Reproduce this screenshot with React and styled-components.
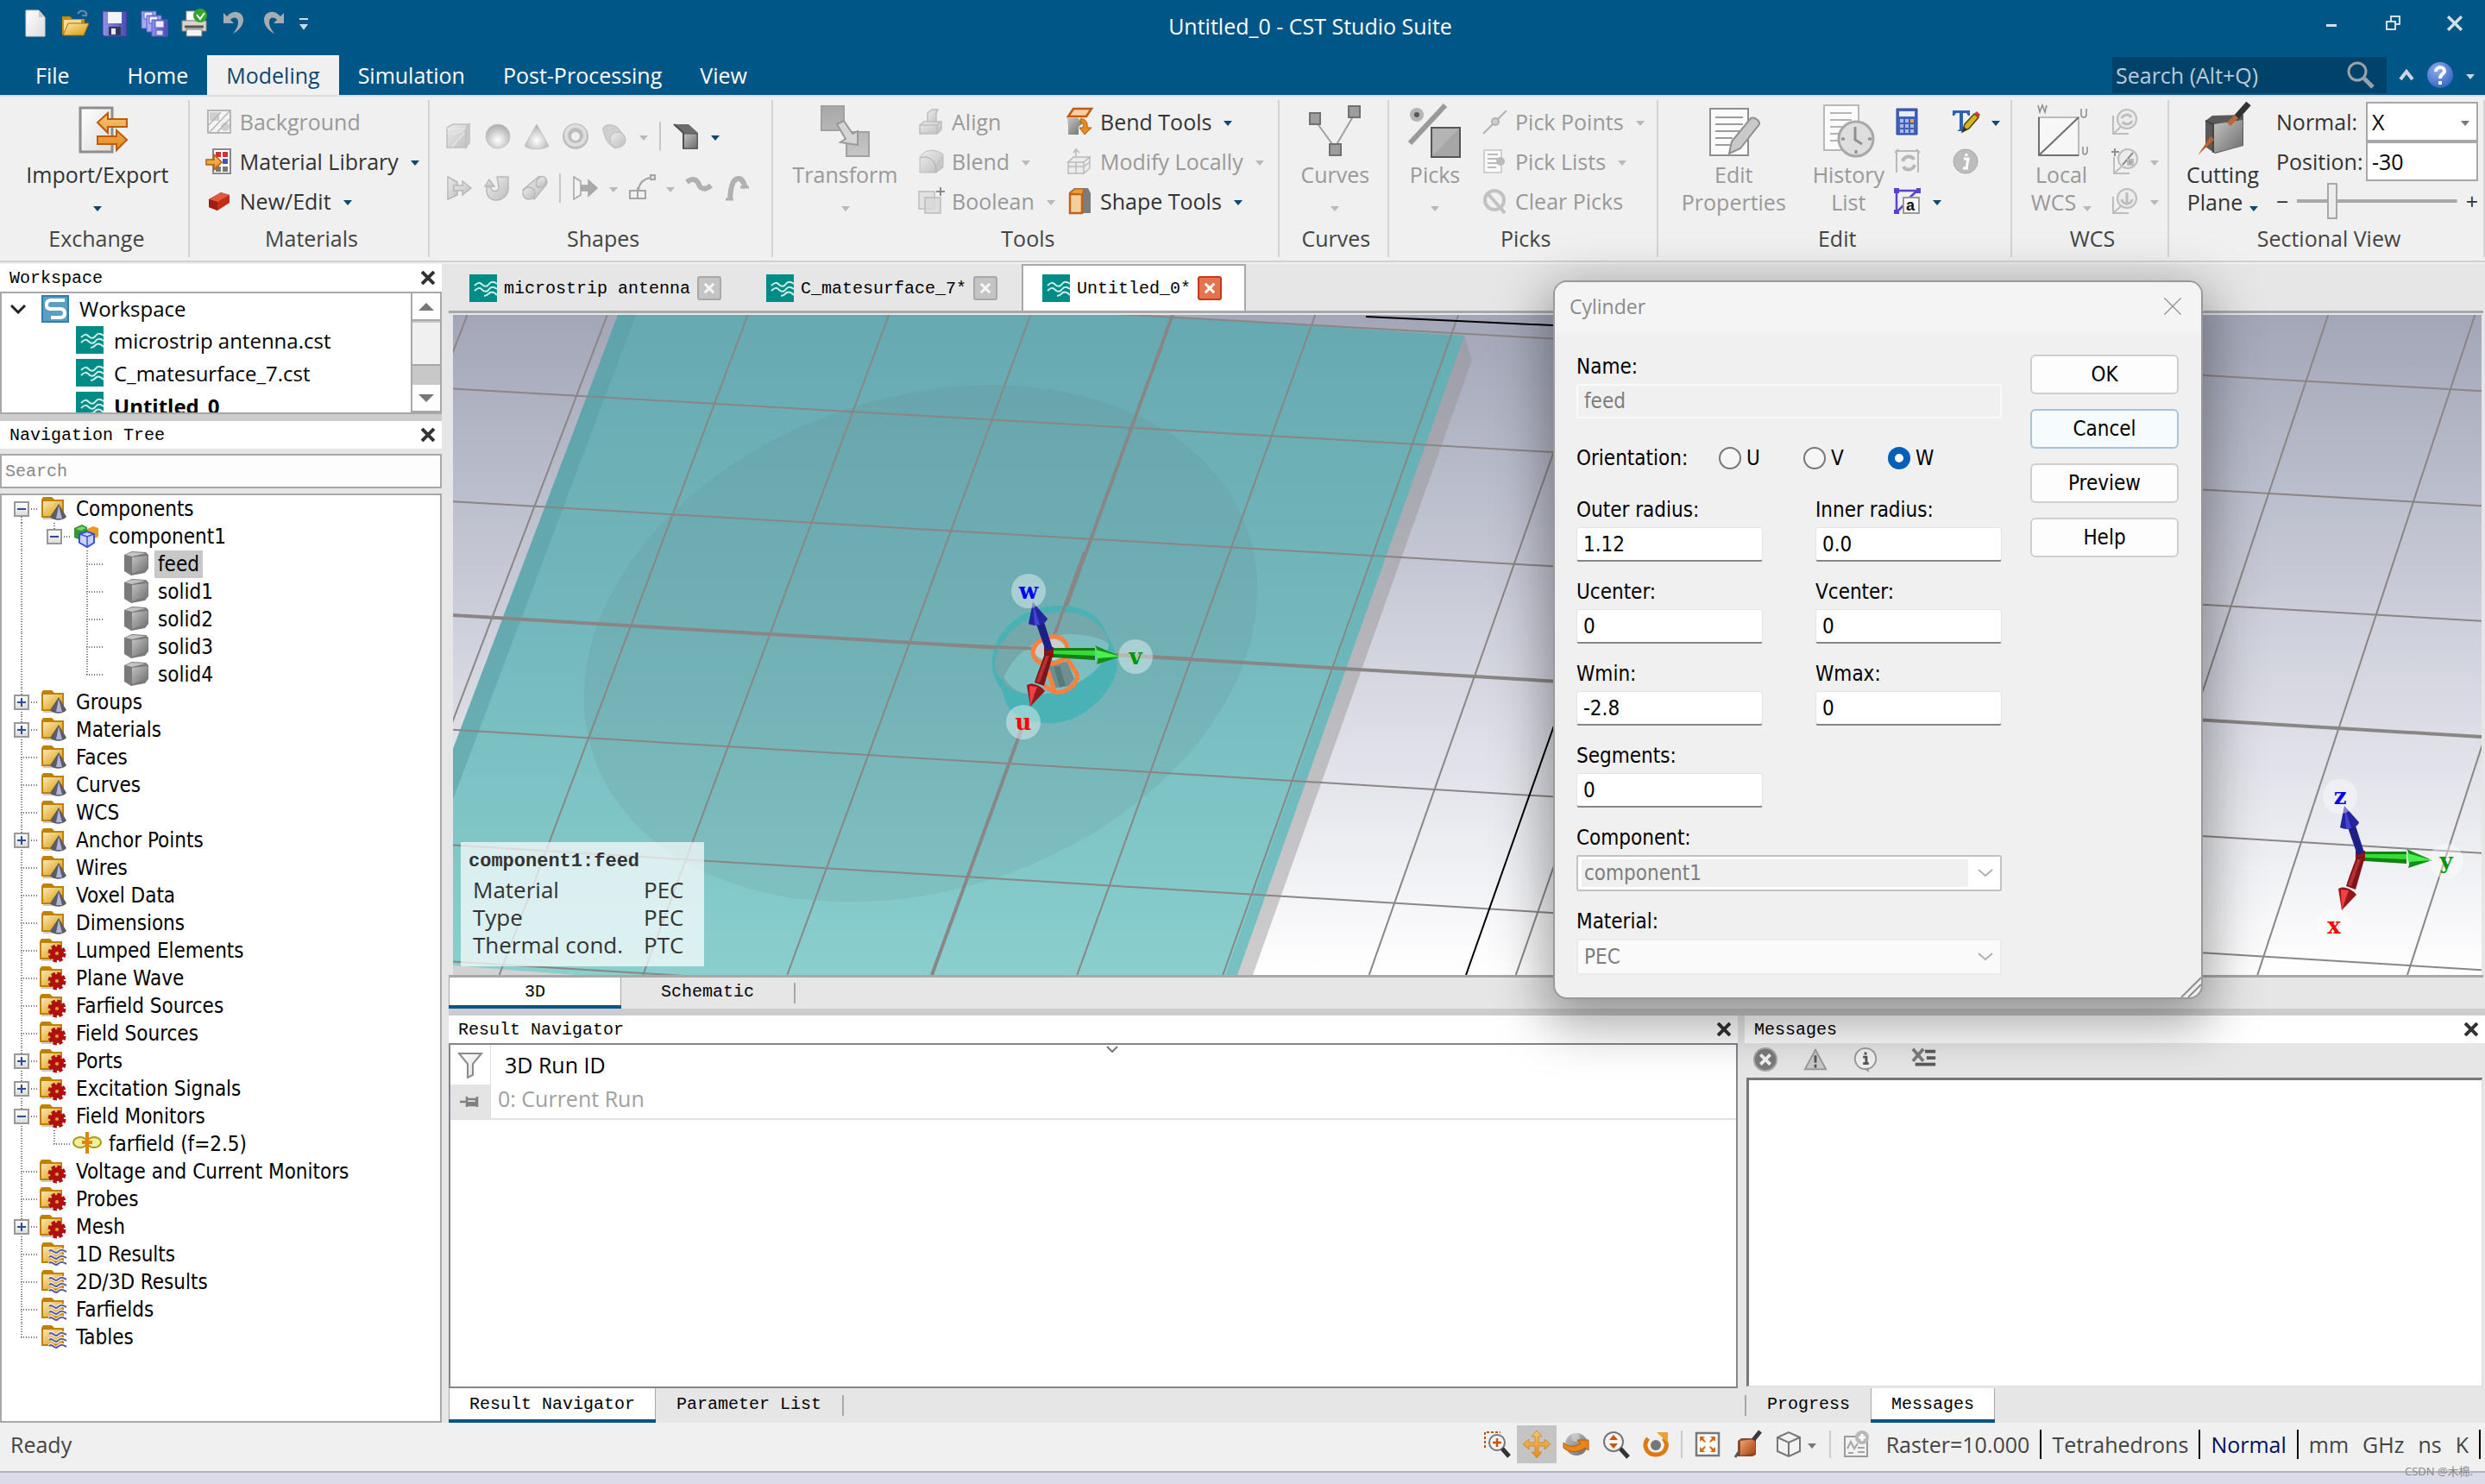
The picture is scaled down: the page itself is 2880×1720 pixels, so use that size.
import React, { useState } from 'react';
import styled, { createGlobalStyle } from 'styled-components';

const UI = '"Open Sans", "Noto Sans", "Noto Sans CJK SC", sans-serif';
const TAHOMA = '"DejaVu Sans Condensed", "Noto Sans", sans-serif';
const MONO = '"Liberation Mono", "Noto Sans CJK SC", monospace';

const GlobalStyle = createGlobalStyle`
  * {
    box-sizing: border-box;
  }
  body {
    margin: 0;
    background-color: #dadde9;
    font-family: ${UI};
    font-size: 25px;
    color: #333;
  }
  button, input, select {
    font: inherit;
    color: inherit;
    margin: 0;
  }
  button {
    padding: 0;
    border: none;
    background: none;
  }
  svg {
    display: block;
    flex: none;
  }
`;

/* ---------- icons ---------- */

const Defs = () => (
  <HiddenSvg width="0" height="0" aria-hidden="true">
    <defs>
      <linearGradient id="steel" x1="0" y1="0" x2="1" y2="1">
        <stop offset="0" stopColor="#ededed" />
        <stop offset="1" stopColor="#bdbdbd" />
      </linearGradient>
      <linearGradient id="dark" x1="0" y1="0" x2="1" y2="1">
        <stop offset="0" stopColor="#c4c4c4" />
        <stop offset="1" stopColor="#6c6c6c" />
      </linearGradient>
      <linearGradient id="mid" x1="0" y1="0" x2="0" y2="1">
        <stop offset="0" stopColor="#a8a8a8" />
        <stop offset="1" stopColor="#c6c6c6" />
      </linearGradient>
      <linearGradient id="paper" x1="0" y1="0" x2="1" y2="1">
        <stop offset="0" stopColor="#fff" />
        <stop offset="1" stopColor="#dcdcdc" />
      </linearGradient>
      <linearGradient id="gold" x1="0" y1="0" x2="1" y2="1">
        <stop offset="0" stopColor="#fae6b4" />
        <stop offset="1" stopColor="#d99a00" />
      </linearGradient>
      <linearGradient id="orange" x1="0" y1="0" x2="0" y2="1">
        <stop offset="0" stopColor="#f7c673" />
        <stop offset="1" stopColor="#e08a1e" />
      </linearGradient>
      <linearGradient id="rust" x1="0" y1="0" x2="1" y2="1">
        <stop offset="0" stopColor="#f0a878" />
        <stop offset="1" stopColor="#a83c08" />
      </linearGradient>
      <linearGradient id="violet" x1="0" y1="0" x2="1" y2="0">
        <stop offset="0" stopColor="#8d92e6" />
        <stop offset="1" stopColor="#4a4bb0" />
      </linearGradient>
      <radialGradient id="ball" cx=".5" cy=".65" r=".6">
        <stop offset="0" stopColor="#fff" />
        <stop offset="1" stopColor="#b0b0b0" />
      </radialGradient>
      <radialGradient id="help" cx=".4" cy=".3" r=".8">
        <stop offset="0" stopColor="#8fb0ee" />
        <stop offset="1" stopColor="#2d5cc0" />
      </radialGradient>
    </defs>
  </HiddenSvg>
);

const icons = {
  newFile: (
    <g>
      <path d="M5 1h15l7 8v22H5z" fill="url(#paper)" stroke="#d5d5d5" />
      <path d="M20 1v8h7z" fill="#c9c9c9" />
    </g>
  ),
  open: (
    <g>
      <path d="M1 8h9l3 3h14v18H1z" fill="#c98f08" />
      <path d="M3 28V12h20v5z" fill="#f4dc93" />
      <path d="M8 16h24l-6 14H2z" fill="url(#gold)" stroke="#a87000" />
      <path d="M19 5c3-5 9-4 10 0M29 8V3M29 7h-5" fill="none" stroke="#6c8ba0" strokeWidth="2" />
    </g>
  ),
  save: (
    <g>
      <path d="M2 2h28v29H4l-2-2z" fill="url(#violet)" stroke="#3b3c9c" />
      <path d="M8 3h16v13H8z" fill="#f2f3ff" />
      <path d="M9 20h14v10H9z" fill="#333a55" />
      <path d="M12 22h5v7h-5z" fill="#e8e8f0" />
    </g>
  ),
  saveAll: (
    <g stroke="#5b5fc4" strokeWidth="1">
      <path d="M1 2h17v20H1z" fill="#a5a9ee" />
      <path d="M4 3h10v8H4z" fill="#eef" />
      <path d="M7 7h17v19H7z" fill="#a5a9ee" />
      <path d="M10 8h10v8H10z" fill="#eef" />
      <path d="M13 12h18v19H13z" fill="url(#violet)" />
      <path d="M17 13h10v8H17z" fill="#eef" />
      <path d="M18 24h8v6h-8z" fill="#dde" />
    </g>
  ),
  print: (
    <g>
      <path d="M7 2h13v11H7z" fill="#fff" stroke="#aaa" />
      <path d="M2 13h28v12H2z" fill="#d8d4cc" stroke="#8b8b86" />
      <path d="M5 20h22" stroke="#555" strokeWidth="3" />
      <path d="M7 23h18v8H7z" fill="#f4f4f4" stroke="#777" />
      <circle cx="23" cy="7" r="8" fill="#35a52f" />
      <path d="M19 6l4 5 5-7" fill="none" stroke="#fff" strokeWidth="2" />
    </g>
  ),
  undo: (
    <path d="M4 4v12h12l-4-4c4-4 9-3 9 3 0 5-3 9-6 13 6-3 12-9 12-16C27 2 15-1 8 8z" fill="#a5adb3" />
  ),
  redo: (
    <path d="M28 4v12H16l4-4c-4-4-9-3-9 3 0 5 3 9 6 13-6-3-12-9-12-16C5 2 17-1 24 8z" fill="#a5adb3" />
  ),
  background: (
    <g>
      <path d="M3 3h26v26H3z" fill="#f4f4f4" stroke="#b5b5b5" strokeWidth="2" />
      <path d="M5 5h11v10H5z" fill="#cfcfcf" />
      <circle cx="23" cy="22" r="5" fill="#cfcfcf" />
      <path d="M5 28L28 4M4 20L18 5M14 28l14-15" stroke="#b5b5b5" strokeWidth="1.5" />
    </g>
  ),
  library: (
    <g>
      <path d="M9 2h20v28H9z" fill="#fff" stroke="#888" strokeWidth="2" />
      <path d="M12 5h6v6h-6zM20 5h6v6h-6z" fill="#c33" />
      <path d="M20 13h6v6h-6z" fill="#4a4fc4" />
      <path d="M12 22h6v6h-6zM20 22h6v6h-6z" fill="#777" />
      <path d="M1 14h9V8l9 9-9 9v-6H1z" fill="url(#orange)" stroke="#b85c00" strokeWidth="1.5" />
    </g>
  ),
  brick: (
    <g>
      <path d="M4 14l14-8 10 3v9l-14 9-10-4z" fill="#c22d14" />
      <path d="M4 14l14-8 10 3-14 8z" fill="#dd5a40" />
      <path d="M14 17v10l-10-4v-9z" fill="#9c200c" />
    </g>
  ),
  box: (
    <g stroke="#c0c0c0" strokeWidth="1.5">
      <path d="M2 6l7-4h19l-4 5v22H2z" fill="url(#steel)" />
      <path d="M24 7l4-5v21l-4 6z" fill="#c9c9c9" />
      <path d="M2 7h22M9 14l12-5M8 28L22 12" fill="none" stroke="#e6e6e6" />
    </g>
  ),
  sphere: <circle cx="16" cy="16" r="14" fill="url(#ball)" stroke="#c4c4c4" />,
  cone: <path d="M16 2l14 25c-4 5-24 5-28 0z" fill="url(#ball)" stroke="#c4c4c4" />,
  torus: (
    <g>
      <circle cx="16" cy="16" r="10" fill="none" stroke="#bdbdbd" strokeWidth="10" />
      <circle cx="16" cy="15" r="11" fill="none" stroke="#dedede" strokeWidth="4" />
    </g>
  ),
  cylinder: (
    <g>
      <path d="M3 8C2 2 14 1 20 6l8 10-10 14C9 27 4 17 3 8z" fill="#cfcfcf" stroke="#bcbcbc" />
      <circle cx="20" cy="20" r="9" fill="url(#steel)" stroke="#bcbcbc" />
    </g>
  ),
  facet: (
    <g>
      <path d="M2 2h17l11 10v19H12V12z" fill="#6d6d6d" />
      <path d="M13 13h16v17H13z" fill="url(#dark)" stroke="#555" />
      <path d="M2 2l11 10v18" fill="none" stroke="#505050" strokeWidth="2" />
    </g>
  ),
  extrude: (
    <g fill="url(#steel)" stroke="#b8b8b8" strokeWidth="1.5">
      <path d="M3 3l11 6v15L3 29z" />
      <path d="M10 13h10V8l10 8-10 8v-5H10z" />
    </g>
  ),
  rotate: (
    <g fill="url(#steel)" stroke="#b8b8b8" strokeWidth="1.5">
      <path d="M16 3h13v13c0 8-6 14-14 14S3 24 4 15h5c0 6 9 6 9 0z" />
      <path d="M2 14h11L7 6z" />
    </g>
  ),
  loft: (
    <g fill="url(#steel)" stroke="#b8b8b8" strokeWidth="1.5">
      <path d="M2 18L20 3c6-2 12 4 9 9L15 29z" />
      <circle cx="9" cy="22" r="7" />
      <ellipse cx="23" cy="9" rx="5" ry="7" transform="rotate(35 23 9)" />
    </g>
  ),
  profile: (
    <g stroke="#a5a5a5" strokeWidth="1.5">
      <path d="M3 3l8 5v16l-8 5z" fill="#f2f2f2" />
      <path d="M12 13h8V7l10 9-10 9v-6h-8z" fill="#a9a9a9" />
    </g>
  ),
  wire: (
    <g fill="none" stroke="#a5a5a5" strokeWidth="2">
      <path d="M2 19h18v9H2zM11 15v14M12 18C13 8 20 5 26 4" />
      <path d="M26 1h5v5h-5z" fill="#e5e5e5" />
    </g>
  ),
  wave: (
    <path d="M2 9c8-6 12-2 14 3s7 7 14 1" fill="none" stroke="#b0b0b0" strokeWidth="6" />
  ),
  hook: (
    <g fill="none" stroke="#b0b0b0">
      <path d="M8 29C9 10 13 4 19 5c4 1 5 5 7 11" strokeWidth="6" />
      <path d="M3 29h9M20 15h10" strokeWidth="3" />
    </g>
  ),
  align: (
    <g fill="url(#steel)" stroke="#bdbdbd" strokeWidth="1.5">
      <path d="M12 6l5-4h7l-2 4v14H12z" />
      <path d="M3 20l5-4h20v9l-5 5H3z" />
      <path d="M3 20h20v10M23 20l5-4" fill="none" />
    </g>
  ),
  blend: (
    <g stroke="#bdbdbd">
      <path d="M3 12C6 3 20 0 30 8v15l-8 6H3z" fill="url(#steel)" />
      <path d="M3 12c8-3 19 0 19 17" fill="none" stroke="#aaa" />
      <path d="M22 22l8-12" />
    </g>
  ),
  boolean: (
    <g fill="#e2e2e2" stroke="#bcbcbc" strokeWidth="1.5">
      <path d="M2 5h18v20H2z" />
      <path d="M9 12h18v18H9z" fill="#d8d8d8" fillOpacity=".8" />
      <path d="M27 0v10M22 5h10" stroke="#8a8a8a" strokeWidth="2" />
    </g>
  ),
  bend: (
    <g>
      <path d="M3 10l6-9h21l-6 9z" fill="#f6cfa2" stroke="#c55a0c" strokeWidth="2.5" />
      <path d="M2 12h12l6 6-5 4v9H3V20z" fill="url(#dark)" />
      <path d="M17 13c6-1 9 4 8 10h5l-8 8-6-8h4c1-4 0-6-3-6z" fill="#e88a24" stroke="#b85c00" />
    </g>
  ),
  modify: (
    <g fill="#ececec" stroke="#bababa" strokeWidth="1.5">
      <path d="M3 17h18v13H3zM3 17l6-6h19l-7 6zM21 30l7-6V11l-7 6z" />
      <path d="M3 22h18l7-5M12 12v-9M9 6l3-4 4 4M12 17v13" fill="none" />
    </g>
  ),
  shape: (
    <g>
      <path d="M4 6l6-5h16l3 6v23H4z" fill="#7c7c7c" />
      <path d="M5 8h14v22H5z" fill="#f3cf9e" stroke="#c8600e" strokeWidth="2.5" />
      <path d="M5 7l6-5h10l-2 6z" fill="#f09a32" stroke="#c8600e" />
    </g>
  ),
  pickPoint: (
    <g stroke="#b0b0b0" strokeWidth="2" fill="#cfcfcf">
      <path d="M3 30L30 3" />
      <circle cx="17" cy="16" r="4" />
    </g>
  ),
  pickList: (
    <g>
      <path d="M4 3h20v26H4z" fill="#fafafa" stroke="#c4c4c4" strokeWidth="1.5" />
      <path d="M8 8h12M8 13h12M8 18h12M8 23h10" stroke="#bbb" strokeWidth="2" />
      <circle cx="23" cy="16" r="5" fill="#bbb" />
    </g>
  ),
  clear: (
    <g fill="none" stroke="#c2c2c2">
      <circle cx="16" cy="15" r="11" strokeWidth="4" />
      <path d="M8 7l20 23" strokeWidth="4" />
    </g>
  ),
  calculator: (
    <g>
      <path d="M4 1h24v30H4z" fill="#4461b8" stroke="#2d479c" />
      <path d="M7 4h18v6H7z" fill="#e4ebfa" />
      <path d="M8 13h4v4H8zM14 13h4v4h-4zM8 19h4v4H8zM14 19h4v4h-4zM20 19h4v4h-4zM8 25h4v4H8zM14 25h4v4h-4zM20 25h4v4h-4z" fill="#a9b9ea" />
      <path d="M20 13h4v4h-4z" fill="#e9a73b" />
    </g>
  ),
  textEdit: (
    <g>
      <path d="M1 3h20v6h-2l-2-3h-4v19l3 2H6l3-2V6H5L3 9H1z" fill="#2a62b8" />
      <path d="M12 28l3-9L26 7l5 4-11 13z" fill="#d8b31d" stroke="#4e4410" strokeWidth="1.5" />
      <path d="M26 7l3-3 4 4-2 3z" fill="#cf3b3b" />
      <path d="M12 28l2-6 4 3z" fill="#333" />
    </g>
  ),
  refreshFrame: (
    <g fill="none" stroke="#b9b9b9" strokeWidth="2">
      <path d="M4 29V4h25v25M2 6l4-4M27 2l4 4" />
      <path d="M11 16c2-7 11-7 13-2M25 20c-2 7-11 7-13 2" strokeWidth="4" />
    </g>
  ),
  info: (
    <g>
      <circle cx="16" cy="16" r="14" fill="#bdbdbd" stroke="#a8a8a8" />
      <path d="M14 13h5l-2 11h2M13 24h5M17 7v3" stroke="#fff" strokeWidth="3" fill="none" />
    </g>
  ),
  paramA: (
    <g>
      <path d="M4 29V4h26M18 13l10-9M4 29l9-9" fill="none" stroke="#5a42cf" strokeWidth="2.5" />
      <path d="M1 1h6v6H1zM27 1h5v6h-5zM1 26h6v5H1z" fill="#5a42cf" />
      <path d="M12 12h18v18H12z" fill="#fff" stroke="#999" strokeWidth="2" />
      <text x="15" y="27" fontSize="18" fontWeight="700" fontFamily="Liberation Sans" fill="#111">a</text>
    </g>
  ),
  wcsTurn: (
    <g fill="none" stroke="#bdbdbd" strokeWidth="2">
      <path d="M3 9v21h18M3 30l9-8" />
      <circle cx="19" cy="13" r="11" fill="#ececec" />
      <path d="M13 12c2-5 9-5 11-1M25 15c-2 5-9 5-11 1" strokeWidth="3" />
    </g>
  ),
  wcsPick: (
    <g fill="none" stroke="#bdbdbd" strokeWidth="2">
      <path d="M4 11v19h18M4 30l9-8" />
      <circle cx="20" cy="13" r="11" fill="#ececec" />
      <path d="M14 20L26 6M5 1v9M1 5h9" stroke="#8f8f8f" />
      <path d="M20 14h6v6h-6z" fill="#aaa" />
    </g>
  ),
  wcsAnchor: (
    <g fill="none" stroke="#bdbdbd" strokeWidth="2">
      <path d="M3 11v19h18M3 30l9-8" />
      <circle cx="19" cy="13" r="11" fill="#ececec" />
      <path d="M19 6v13M13 14c1 7 11 7 12 0" strokeWidth="3" />
    </g>
  ),
  folderCone: (
    <g>
      <path d="M0 3l2-3h10l3 3h11v21H0z" fill="#c08000" />
      <path d="M2 5h22v17H2z" fill="url(#gold)" />
      <path d="M2 25h17" stroke="#ccc" strokeWidth="2" />
      <path d="M20 8l9 15c-4 5-15 5-19 0z" fill="#5c5c66" />
      <path d="M20 10l4 15h-7z" fill="#b3b6dc" />
    </g>
  ),
  folderGear: (
    <g>
      <path d="M-2 3l2-3h10l3 3h11v21H-2z" fill="#c08000" />
      <path d="M0 5h22v17H0z" fill="url(#gold)" />
      <path d="M0 25h14" stroke="#ccc" strokeWidth="2" />
      <circle cx="18" cy="17" r="8" fill="none" stroke="#b01010" strokeWidth="5" strokeDasharray="4 2.3" />
      <circle cx="18" cy="17" r="5" fill="none" stroke="#b01010" strokeWidth="6" />
    </g>
  ),
  folderWave: (
    <g>
      <path d="M0 3l2-3h10l3 3h11v21H0z" fill="#c08000" />
      <path d="M2 5h22v17H2z" fill="url(#gold)" />
      <path d="M9 10c4-4 6 5 10 1s6-2 10 0M9 17c4-4 6 5 10 1s6-2 10 0M9 24c4-4 6 5 10 1s6-2 10 0" fill="none" stroke="#fff" strokeWidth="4" />
      <path d="M9 10c4-4 6 5 10 1s6-2 10 0M9 17c4-4 6 5 10 1s6-2 10 0M9 24c4-4 6 5 10 1s6-2 10 0" fill="none" stroke="#5a55a8" strokeWidth="2" />
    </g>
  ),
  cubes: (
    <g>
      <path d="M0 4l9-4 6 3v10l-8 5-7-3z" fill="#2f9a2f" />
      <path d="M2 5l7-3 5 2-6 3z" fill="#7ad46f" />
      <path d="M15 5l7-3 6 2v10l-7 3-6-3z" fill="#ea9a1c" />
      <path d="M6 11l9-3 8 3v10l-8 5-9-5z" fill="#c8d2fb" stroke="#3c50d0" strokeWidth="2" />
      <path d="M6 11l9 3 8-3M15 14v11" fill="none" stroke="#3c50d0" strokeWidth="1.5" />
    </g>
  ),
  solid: (
    <g>
      <path d="M1 3l9-4 16 1 3 3v16l-4 5-16 3-8-5z" fill="#7a7a7a" />
      <path d="M2 3l8-3 16 1-16 4z" fill="#c4c4c4" />
      <path d="M10 6l18-2v15l-18 6z" fill="url(#dark)" />
    </g>
  ),
  farfield: (
    <g>
      <ellipse cx="7" cy="12" rx="8" ry="6" fill="#eef09c" stroke="#a89a10" strokeWidth="2" />
      <ellipse cx="23" cy="12" rx="8" ry="6" fill="#eef09c" stroke="#a89a10" strokeWidth="2" />
      <path d="M15 0v25M9 12h12" stroke="#e0850c" strokeWidth="4" />
    </g>
  ),
  project: (
    <g>
      <path d="M0 0h32v32H0z" fill="#008c86" />
      <path d="M6 13c4-4 6-4 9-1s6 2 8-1 5-3 9 0M6 19c4-4 6-4 9-1s6 2 8-1 5-3 9 0M17 25c4 0 5-3 7-4s4-1 8 3" fill="none" stroke="#cdeeea" strokeWidth="2" />
    </g>
  ),
  workspace: (
    <g>
      <path d="M0 0h32v32H0z" fill="#2f7fad" />
      <path d="M2 2h28v28H2z" fill="#5b9fc4" />
      <path d="M27 6H11q-5 0-5 5v1q0 4 5 4h11q5 0 5 5v0q0 5-5 5H11" fill="none" stroke="#fff" strokeWidth="4" />
    </g>
  ),
  funnel: (
    <path d="M3 3h26L19 15v13l-6 3V15z" fill="url(#paper)" stroke="#8a8a8a" strokeWidth="2" />
  ),
  pin: (
    <g stroke="#808080" strokeWidth="2.5" fill="none">
      <path d="M4 16h8M12 10v12M12 13h11v7H12M24 10v12" />
      <path d="M13 18h10" strokeWidth="4" />
    </g>
  ),
  errorBall: (
    <g>
      <circle cx="16" cy="16" r="14" fill="#7b7b7b" stroke="#a9a9a9" strokeWidth="2" />
      <path d="M10 10l12 12M22 10L10 22" stroke="#f2f2f2" strokeWidth="4" />
    </g>
  ),
  warning: (
    <g>
      <path d="M16 4l13 24H3z" fill="#c9c9c9" stroke="#9a9a9a" strokeWidth="2" />
      <path d="M16 11v9M16 22v4" stroke="#555" strokeWidth="3" />
    </g>
  ),
  infoBubble: (
    <g>
      <circle cx="16" cy="15" r="13" fill="#f1f1f1" stroke="#999" strokeWidth="2" />
      <path d="M14 27l6 5v-6z" fill="#999" />
      <path d="M16 7v3M13 13h4v8M13 21h7" stroke="#555" strokeWidth="3" fill="none" />
    </g>
  ),
  clearList: (
    <g>
      <path d="M2 3l13 15M15 3L2 18" stroke="#7b7b7b" strokeWidth="4" />
      <path d="M17 6h13M19 14h11M5 22h25" stroke="#5b5b5b" strokeWidth="4" />
    </g>
  ),
  zoomFrame: (
    <g>
      <path d="M2 20V2h18" fill="none" stroke="#b8560f" strokeWidth="2" strokeDasharray="3 2" />
      <circle cx="16" cy="14" r="9" fill="#f5f5f5" stroke="#777" strokeWidth="2" />
      <path d="M16 9v10M11 14h10" stroke="#c8560c" strokeWidth="2.5" />
      <path d="M22 21l8 9" stroke="#333" strokeWidth="5" />
    </g>
  ),
  pan: (
    <path d="M16 0l6 7h-4v7h7v-4l7 6-7 6v-4h-7v7h4l-6 7-6-7h4v-7H7v4l-7-6 7-6v4h7V7h-4z" fill="url(#orange)" stroke="#d48b2b" />
  ),
  orbit: (
    <g>
      <circle cx="16" cy="16" r="13" fill="url(#dark)" />
      <circle cx="15" cy="8" r="5" fill="#d8d8d8" fillOpacity=".6" />
      <path d="M1 14c6 6 14 5 20 1l-4-4h13v12l-4-3c-7 6-19 6-25 0z" fill="#e8861c" stroke="#b85c00" />
    </g>
  ),
  zoom: (
    <g>
      <circle cx="13" cy="13" r="11" fill="#f5f5f5" stroke="#777" strokeWidth="2" />
      <path d="M13 5l5 6H8zM13 21l5-6H8z" fill="#c8560c" />
      <path d="M21 21l9 10" stroke="#333" strokeWidth="5" />
    </g>
  ),
  spin: (
    <g>
      <path d="M7 9c-7 9-1 19 9 19 11 0 16-11 9-19" fill="none" stroke="#e0790f" strokeWidth="5" />
      <path d="M17 2h13v12z" fill="#f0a132" />
      <circle cx="16" cy="17" r="6" fill="#777" />
    </g>
  ),
  fit: (
    <g>
      <path d="M3 3h26v26H3z" fill="#fff" stroke="#777" strokeWidth="2.5" />
      <path d="M7 7h6l-2 2 3 4-1 1-4-3-2 2zM25 7h-6l2 2-3 4 1 1 4-3 2 2zM7 25h6l-2-2 3-4-1-1-4 3-2-2zM25 25h-6l2-2-3-4 1-1 4 3 2-2z" fill="#d96a14" />
    </g>
  ),
  cutSmall: (
    <g>
      <path d="M5 12l4-3h17v19l-4 2H5z" fill="#8a4a28" />
      <path d="M8 12l17-2v16L8 29z" fill="url(#rust)" />
      <path d="M31 1l-8 10" stroke="#3a3a3a" strokeWidth="5" />
      <path d="M6 25l-4 6" stroke="#555" strokeWidth="3" />
    </g>
  ),
  cube: (
    <path d="M3 8l13-6 13 6v16l-13 6-13-6zM3 8l13 6 13-6M16 14v16" fill="#f2f2f2" stroke="#777" strokeWidth="2" />
  ),
  report: (
    <g>
      <path d="M3 7h26v23H3z" fill="#f2f2f2" stroke="#9a9a9a" strokeWidth="2" />
      <path d="M6 21l4-8 4 8 4-6M7 26h6M18 20h8M18 25h8" fill="none" stroke="#a5a5a5" strokeWidth="2" />
      <circle cx="23" cy="8" r="8" fill="#b8b8b8" />
      <path d="M23 4v8M19 8h8" stroke="#fff" strokeWidth="3" />
    </g>
  ),
};

const bigIcons = {
  importExport: (
    <g>
      <path d="M10 3h37v51H10z" fill="url(#paper)" stroke="#8e8e8e" strokeWidth="3" />
      <path d="M30 20L42 9v7h22v9H42v7zM64 40L52 29v7H30v9h22v7z" fill="url(#orange)" stroke="#bf5a08" strokeWidth="2" />
    </g>
  ),
  transform: (
    <g>
      <path d="M2 1h26v28H2zM31 31h26v28H31z" fill="url(#mid)" stroke="#a0a0a0" strokeWidth="2" />
      <path d="M20 22l8-4 10 15 6-3v16l-20-3 6-4z" fill="#d5d5d5" stroke="#9a9a9a" strokeWidth="2" />
    </g>
  ),
  curves: (
    <g>
      <path d="M6 16l24 33L54 8" fill="none" stroke="#9f9f9f" strokeWidth="2" />
      <path d="M1 9h12v13H1zM46 1h13v13H46zM24 45h13v13H24z" fill="#9d9d9d" stroke="#717171" strokeWidth="2" />
    </g>
  ),
  picks: (
    <g>
      <path d="M1 44L42 0" stroke="#9a9a9a" strokeWidth="6" />
      <circle cx="9" cy="11" r="8" fill="#b4b4b4" />
      <circle cx="9" cy="11" r="3" fill="#555" />
      <path d="M26 26h33v34H26z" fill="#a6a6a6" stroke="#555" strokeWidth="2" />
      <path d="M27 59V27h31z" fill="#b4b4b4" />
    </g>
  ),
  editDoc: (
    <g>
      <path d="M3 4h44v54H3z" fill="#fbfbfb" stroke="#8e8e8e" strokeWidth="2" />
      <path d="M9 14h32M9 22h32M9 30h28M9 38h20M9 46h17" stroke="#9c9c9c" strokeWidth="2" />
      <path d="M25 56l3-14 22-27c4-2 11 3 10 7L38 50z" fill="#c9c9c9" stroke="#909090" strokeWidth="2" />
    </g>
  ),
  history: (
    <g>
      <path d="M2 0h40v52H2z" fill="#fbfbfb" stroke="#b8b8b8" strokeWidth="2" />
      <path d="M9 9h25M9 17h25M9 25h14M9 33h10M9 41h10" stroke="#b5b5b5" strokeWidth="2" />
      <circle cx="39" cy="39" r="20" fill="#dedede" stroke="#a8a8a8" strokeWidth="3" />
      <path d="M38 25v15l8 5M39 52v4M22 39h4M53 39h4" fill="none" stroke="#8f8f8f" strokeWidth="3" />
    </g>
  ),
  localWcs: (
    <g>
      <path d="M4 14v44h46V14z" fill="#f7f7f7" stroke="#bbb" strokeWidth="2" />
      <path d="M4 14v44h46M4 58l46-44" fill="none" stroke="#6f6f6f" strokeWidth="2" />
      <path d="M3 0l2 8 3-8 3 8 2-8M53 4v7q0 3 3 3t3-3V4M55 48v6q0 3 2 3t3-3v-6" fill="none" stroke="#8b8b8b" strokeWidth="1.5" />
    </g>
  ),
  cutting: (
    <g>
      <path d="M10 18l8-6 36-1v36l-33 9-11-8z" fill="#5a5a5a" />
      <path d="M20 22l33-5v30l-33 8z" fill="url(#dark)" />
      <path d="M10 18l9 4v33" fill="none" stroke="#444" strokeWidth="2" />
      <path d="M60 -2L44 16" stroke="#333" strokeWidth="7" />
      <path d="M46 13l-9 9" stroke="#b8683c" strokeWidth="6" />
      <path d="M1 58l15-22 4 4z" fill="#c0602c" />
    </g>
  ),
};

const Icon = ({ name, size = 32 }) => (
  <svg width={size} height={size} viewBox="0 0 32 32" overflow="visible" aria-hidden="true">
    {icons[name]}
  </svg>
);

const BigIcon = ({ name }) => (
  <svg width="60" height="60" viewBox="0 0 60 60" overflow="visible" aria-hidden="true">
    {bigIcons[name]}
  </svg>
);

const CloseMark = ({ size = 16, color = '#333', width = 4 }) => (
  <svg width={size} height={size} viewBox="0 0 16 16" aria-hidden="true">
    <path d="M1 1l14 14M15 1L1 15" stroke={color} strokeWidth={width} />
  </svg>
);

/* ---------- title bar and ribbon ---------- */

const TitleBar = () => (
  <Title>
    <QuickBar>
      {['newFile', 'open', 'save', 'saveAll', 'print', 'undo', 'redo'].map((name) => (
        <IconButton key={name} aria-label={name}>
          <Icon name={name} />
        </IconButton>
      ))}
      <IconButton aria-label="Customize">
        <svg width="10" height="16" viewBox="0 0 10 16">
          <path d="M0 3h10M2 10h6l-3 4z" stroke="#cfdbe4" strokeWidth="2" fill="#cfdbe4" />
        </svg>
      </IconButton>
    </QuickBar>
    <WindowTitle>Untitled_0 - CST Studio Suite</WindowTitle>
    <WindowButtons>
      <IconButton aria-label="Minimize">
        <svg width="20" height="20" viewBox="0 0 20 20">
          <path d="M4 11h12v3H4z" fill="#d4dfe7" />
        </svg>
      </IconButton>
      <IconButton aria-label="Restore">
        <svg width="20" height="20" viewBox="0 0 20 20">
          <path d="M7 7V2h10v9h-4M2 8h10v9H2z" fill="none" stroke="#d4dfe7" strokeWidth="2" />
        </svg>
      </IconButton>
      <IconButton aria-label="Close">
        <CloseMark size={18} color="#d4dfe7" width={3} />
      </IconButton>
    </WindowButtons>
  </Title>
);

const menu = ['File', 'Home', 'Modeling', 'Simulation', 'Post-Processing', 'View'];

const MenuBar = () => (
  <Menu>
    {menu.map((item) => (
      <MenuTab key={item} $active={item === 'Modeling'} $wide={item === 'File'}>
        {item}
      </MenuTab>
    ))}
    <MenuSearch>
      <input type="text" placeholder="Search (Alt+Q)" aria-label="Search (Alt+Q)" />
      <svg width="32" height="32" viewBox="0 0 32 32">
        <circle cx="12" cy="12" r="10" fill="none" stroke="#9aa3aa" strokeWidth="3" />
        <path d="M20 20l10 10" stroke="#9aa3aa" strokeWidth="5" />
      </svg>
    </MenuSearch>
    <IconButton aria-label="Collapse ribbon">
      <svg width="18" height="14" viewBox="0 0 18 14">
        <path d="M2 12l7-9 7 9" fill="none" stroke="#c9d7e0" strokeWidth="4" />
      </svg>
    </IconButton>
    <IconButton aria-label="Help">
      <svg width="32" height="32" viewBox="0 0 32 32">
        <circle cx="16" cy="16" r="15" fill="url(#help)" />
        <path d="M11 12c0-7 11-6 10 0-1 3-5 3-5 8M16 23v4" fill="none" stroke="#fff" strokeWidth="4" />
      </svg>
    </IconButton>
    <Caret $color="#c9d7e0" />
  </Menu>
);

const Small = ({ icon, label, caret, on }) => (
  <SmallButton disabled={!on} aria-label={label || icon}>
    <Icon name={icon} />
    {label}
    {caret && <Caret $color={on ? '#0b4870' : '#b9b9b9'} />}
  </SmallButton>
);

const Big = ({ icon, lines, on, caret }) => (
  <BigButton disabled={!on}>
    <BigIcon name={icon} />
    <span>{lines[0]}</span>
    <BigSecond>
      {lines[1]}
      {caret && <Caret $color={on ? '#0b4870' : '#b9b9b9'} $low />}
    </BigSecond>
  </BigButton>
);

const Group = ({ title, grow, cols, pad, center, children }) => (
  <RibbonGroup $grow={grow}>
    <GroupBody $cols={cols} $pad={pad} $center={center}>
      {children}
    </GroupBody>
    <GroupTitle>{title}</GroupTitle>
  </RibbonGroup>
);

const Ribbon = () => {
  const [position, setPosition] = useState(-30);
  return (
    <RibbonBar>
      <Group title="Exchange" grow={219} pad={8} center>
        <Big icon="importExport" lines={['Import/Export']} on caret />
      </Group>
      <Group title="Materials" grow={278} pad={18}>
        <Rows>
          <Small icon="background" label="Background" />
          <Small icon="library" label="Material Library" on caret />
          <Small icon="brick" label="New/Edit" on caret />
        </Rows>
      </Group>
      <Group title="Shapes" grow={398} pad={18}>
        <ShapeRows>
          <ShapeRow $gap={13}>
            <Icon name="box" />
            <Icon name="sphere" />
            <Icon name="cone" />
            <Icon name="torus" />
            <Icon name="cylinder" />
            <Caret $color="#b9b9b9" />
            <Divider />
            <Icon name="facet" />
            <Caret $color="#0b4870" />
          </ShapeRow>
          <ShapeRow $gap={12}>
            <Icon name="extrude" />
            <Icon name="rotate" />
            <Icon name="loft" />
            <Divider />
            <Icon name="profile" />
            <Caret $color="#b9b9b9" />
            <Icon name="wire" />
            <Caret $color="#b9b9b9" />
            <Icon name="wave" />
            <Icon name="hook" />
          </ShapeRow>
        </ShapeRows>
      </Group>
      <Group title="Tools" grow={588} cols="167px 172px 1fr">
        <Big icon="transform" lines={['Transform']} caret />
        <Rows>
          <Small icon="align" label="Align" />
          <Small icon="blend" label="Blend" caret />
          <Small icon="boolean" label="Boolean" caret />
        </Rows>
        <Rows>
          <Small icon="bend" label="Bend Tools" on caret />
          <Small icon="modify" label="Modify Locally" caret />
          <Small icon="shape" label="Shape Tools" on caret />
        </Rows>
      </Group>
      <Group title="Curves" grow={126} pad={4} center>
        <Big icon="curves" lines={['Curves']} caret />
      </Group>
      <Group title="Picks" grow={312} cols="106px 1fr">
        <Big icon="picks" lines={['Picks']} caret />
        <Rows>
          <Small icon="pickPoint" label="Pick Points" caret />
          <Small icon="pickList" label="Pick Lists" caret />
          <Small icon="clear" label="Clear Picks" />
        </Rows>
      </Group>
      <Group title="Edit" grow={410} cols="174px 92px 74px 1fr">
        <Big icon="editDoc" lines={['Edit', 'Properties']} />
        <Big icon="history" lines={['History', 'List']} />
        <Rows $inset>
          <Small icon="calculator" on />
          <Small icon="refreshFrame" />
          <Small icon="paramA" on caret />
        </Rows>
        <Rows>
          <Small icon="textEdit" on caret />
          <Small icon="info" />
        </Rows>
      </Group>
      <Group title="WCS" grow={181} cols="114px 1fr">
        <Big icon="localWcs" lines={['Local', 'WCS']} caret />
        <Rows>
          <Small icon="wcsTurn" />
          <Small icon="wcsPick" caret />
          <Small icon="wcsAnchor" caret />
        </Rows>
      </Group>
      <Group title="Sectional View" grow={366} cols="124px 1fr">
        <Big icon="cutting" lines={['Cutting', 'Plane']} on caret />
        <Rows>
          <RibbonField>
            <label htmlFor="normal">Normal:</label>
            <SelectWrap>
              <RibbonSelect id="normal" defaultValue="X">
                <option>X</option>
                <option>Y</option>
                <option>Z</option>
              </RibbonSelect>
              <CaretSlot>
                <Caret $color="#777" />
              </CaretSlot>
            </SelectWrap>
          </RibbonField>
          <RibbonField>
            <label htmlFor="position">Position:</label>
            <RibbonInput id="position" value={position} onChange={(e) => setPosition(e.target.value)} />
          </RibbonField>
          <SliderRow>
            <span>−</span>
            <Slider
              type="range"
              min="-50"
              max="50"
              aria-label="Plane position"
              value={position}
              onChange={(e) => setPosition(e.target.value)}
            />
            <span>+</span>
          </SliderRow>
        </Rows>
      </Group>
    </RibbonBar>
  );
};

/* ---------- left side ---------- */

const files = ['microstrip antenna.cst', 'C_matesurface_7.cst', 'Untitled_0'];

const WorkspacePanel = () => (
  <>
    <PanelTitle title="Workspace" />
    <WorkspaceBox>
      <FileList>
        <FileRow $root>
          <svg width="18" height="12" viewBox="0 0 18 12">
            <path d="M1 2l8 8 8-8" fill="none" stroke="#222" strokeWidth="3" />
          </svg>
          <Icon name="workspace" />
          Workspace
        </FileRow>
        {files.map((file, i) => (
          <FileRow key={file} $bold={i === 2}>
            <Icon name="project" />
            {file}
          </FileRow>
        ))}
      </FileList>
      <ScrollTrack>
        <ScrollArrow $up aria-label="Scroll up" />
        <ScrollThumb />
        <ScrollArrow aria-label="Scroll down" />
      </ScrollTrack>
    </WorkspaceBox>
  </>
);

const tree = [
  { text: 'Components', icon: 'folderCone', open: '-' },
  { text: 'component1', icon: 'cubes', level: 1, open: '-', last: true },
  { text: 'feed', icon: 'solid', level: 2, selected: true },
  { text: 'solid1', icon: 'solid', level: 2 },
  { text: 'solid2', icon: 'solid', level: 2 },
  { text: 'solid3', icon: 'solid', level: 2 },
  { text: 'solid4', icon: 'solid', level: 2, last: true },
  { text: 'Groups', icon: 'folderCone', open: '+' },
  { text: 'Materials', icon: 'folderCone', open: '+' },
  { text: 'Faces', icon: 'folderCone' },
  { text: 'Curves', icon: 'folderCone' },
  { text: 'WCS', icon: 'folderCone' },
  { text: 'Anchor Points', icon: 'folderCone', open: '+' },
  { text: 'Wires', icon: 'folderCone' },
  { text: 'Voxel Data', icon: 'folderCone' },
  { text: 'Dimensions', icon: 'folderCone' },
  { text: 'Lumped Elements', icon: 'folderGear' },
  { text: 'Plane Wave', icon: 'folderGear' },
  { text: 'Farfield Sources', icon: 'folderGear' },
  { text: 'Field Sources', icon: 'folderGear' },
  { text: 'Ports', icon: 'folderGear', open: '+' },
  { text: 'Excitation Signals', icon: 'folderGear', open: '+' },
  { text: 'Field Monitors', icon: 'folderGear', open: '-' },
  { text: 'farfield (f=2.5)', icon: 'farfield', level: 1, last: true },
  { text: 'Voltage and Current Monitors', icon: 'folderGear' },
  { text: 'Probes', icon: 'folderGear' },
  { text: 'Mesh', icon: 'folderGear', open: '+' },
  { text: '1D Results', icon: 'folderWave' },
  { text: '2D/3D Results', icon: 'folderWave' },
  { text: 'Farfields', icon: 'folderWave' },
  { text: 'Tables', icon: 'folderWave', last: true },
];

const TreeItem = ({ text, icon, level = 0, open, last, selected, first }) => (
  <TreeRow>
    {level > 0 && <Guide $v="full" />}
    {level > 1 && <Guide />}
    <Guide $v={last ? 'top' : first ? 'bottom' : 'full'} $h>
      {open && (
        <Expander aria-label={open === '-' ? 'Collapse' : 'Expand'}>
          <svg width="12" height="12" viewBox="0 0 12 12">
            <path d={open === '-' ? 'M1 6h10' : 'M1 6h10M6 1v10'} stroke="#2b4d9c" strokeWidth="2" />
          </svg>
        </Expander>
      )}
    </Guide>
    <TreeIcon $deep={level === 2}>
      <Icon name={icon} />
    </TreeIcon>
    <TreeLabel $selected={selected}>{text}</TreeLabel>
  </TreeRow>
);

const PanelTitle = ({ title }) => (
  <PanelHead>
    <span>{title}</span>
    <IconButton aria-label={`Close ${title}`}>
      <CloseMark />
    </IconButton>
  </PanelHead>
);

const Sidebar = () => (
  <Side>
    <WorkspacePanel />
    <Splitter />
    <PanelTitle title="Navigation Tree" />
    <TreeSearch type="text" placeholder="Search" aria-label="Search tree" />
    <TreeBox>
      {tree.map((item, i) => (
        <TreeItem key={item.text} {...item} first={i === 0} />
      ))}
    </TreeBox>
  </Side>
);

/* ---------- 3D view ---------- */

const Gizmo = ({ x, y, labels }) => (
  <g transform={`translate(${x} ${y})`}>
    <path d="M-5 -7h11v12h-11z" fill="#8c1518" />
    <path d="M-3 -2L-14 -34L-5 -36L5 -5z" fill="#1f1f85" />
    <path d="M-18 -59L-1 -40C-3 -33 -16 -30 -23 -34z" fill="#2525a0" />
    <path d="M-18 -59L-10 -33L-16 -32z" fill="#4343d6" />
    <path d="M6 -6H54V8L6 5z" fill="#128012" />
    <path d="M6 -3H54V3L6 1z" fill="#35dc35" />
    <path d="M84 4L54 -9C58 -4 58 8 56 13z" fill="#12901a" />
    <path d="M84 4L55 -4L56 6z" fill="#4af04a" />
    <path d="M-4 0H6L-5 38L-16 34C-13 24 -8 12 -4 0z" fill="#7d1517" />
    <path d="M-3 3H1L-10 34L-14 33z" fill="#b83033" />
    <path d="M-21 62L-25 37C-19 33 -9 37 -4 44z" fill="#94181b" />
    <path d="M-21 62L-22 38L-13 39z" fill="#f04043" />
    {labels.map(([text, dx, dy, color]) => (
      <g key={text}>
        <circle cx={dx} cy={dy} r="20" fill="#fff" fillOpacity=".4" />
        <text
          x={dx}
          y={dy + 9}
          textAnchor="middle"
          fontFamily="DejaVu Serif"
          fontWeight="700"
          fontSize="26"
          fill={color}
        >
          {text}
        </text>
      </g>
    ))}
  </g>
);

const steep = Array.from({ length: 17 }, (_, i) => i - 6);
const flat = [-3, -2, -1, 0, 1, 2, 3];

const Scene = () => (
  <SceneSvg viewBox="525 365 2351 765" preserveAspectRatio="xMidYMid slice" role="img" aria-label="3D model view">
    <defs>
      <linearGradient id="sky" x1="0" y1="0" x2="0" y2="1">
        <stop offset="0" stopColor="#a2a6b7" />
        <stop offset=".5" stopColor="#d0d2dd" />
        <stop offset="1" stopColor="#ffffff" />
      </linearGradient>
      <linearGradient id="slab" x1="0" y1="0" x2="0" y2="1">
        <stop offset="0" stopColor="#67a9b1" />
        <stop offset=".5" stopColor="#74b9bd" />
        <stop offset="1" stopColor="#8acfce" />
      </linearGradient>
      <linearGradient id="shade" x1="0" y1="0" x2="0" y2="1">
        <stop offset="0" stopColor="#9d9ea8" />
        <stop offset="1" stopColor="#cfcdcd" />
      </linearGradient>
    </defs>
    <path d="M525 365h2351v765H525z" fill="url(#sky)" />
    <path d="M1697 389l9 28-254 713h-20z" fill="url(#shade)" />
    <path d="M525 1118l140 12H525z" fill="#d2d2d2" />
    <path d="M716 365H1320L1697 389L1434 1130H665L525 1119V868z" fill="url(#slab)" />
    <path d="M716 365h21L535 900l-10 26v-58z" fill="#5a9fa5" fillOpacity=".55" />
    <path d="M1684 388l13 1-263 741h-14z" fill="#64b4b8" fillOpacity=".5" />
    <ellipse cx="1067" cy="746" rx="401" ry="285" transform="rotate(-19 1067 746)" fill="#5c7d80" fillOpacity=".13" />
    <g fill="none" stroke="#8a8685">
      {steep.map((k) => (
        <path
          key={k}
          d={`M${1359 + 165 * k + 0.3 * k * k} 365L${1080 + 168 * k + 0.3 * k * k} 1130`}
          strokeWidth={k === 0 ? 4 : 2}
        />
      ))}
      {flat.map((j) => (
        <path
          key={j}
          d={`M525 ${713 + 132.3 * j + 0.5 * j * j}L2876 ${854 + 134.5 * j + 0.3 * j * j}`}
          strokeWidth={j === 0 ? 4 : 2}
        />
      ))}
    </g>
    <path d="M1583 367l300 14M1830 759L1699 1130" fill="none" stroke="#000" strokeWidth="2" />
    <g transform="translate(1100 640) scale(.3333)">
      <path d="M150 370C160 260 270 180 400 186C480 190 530 230 550 290C600 370 590 430 550 480C500 550 420 600 340 594C260 590 200 570 185 480C160 450 148 420 150 370z" fill="#48b2b5" />
      <path d="M158 385C170 290 270 208 390 208C470 208 525 240 552 300C556 390 470 460 350 490C270 500 200 490 185 440C165 430 158 410 158 385z" fill="#74a8ab" />
      <path d="M190 435C230 340 330 280 430 285C490 288 530 300 555 318C550 400 460 465 350 490C290 500 230 500 190 435z" fill="#7dbec1" />
      <path d="M0 322L310 336M470 0L365 290M560 355L840 371" stroke="#8a8685" strokeWidth="11" fill="none" />
      <path d="M345 395L410 380L435 440L415 465L370 472z" fill="#6e8f90" />
      <path d="M365 400l20-5 20 70-20 5z" fill="#587a7a" />
      <ellipse cx="350" cy="338" rx="55" ry="38" fill="#c9cfcf" />
      <path d="M318 385C270 360 290 310 350 295C390 285 420 320 408 345C420 380 350 395 318 385zM412 372L445 425C450 460 400 495 365 485L330 465M345 415L365 480" fill="none" stroke="#ff7f3c" strokeWidth="15" strokeLinejoin="round" />
    </g>
    <Gizmo
      x={1215}
      y={757}
      labels={[
        ['w', -23, -72, '#0000f5'],
        ['v', 101, 4, '#009600'],
        ['u', -29, 80, '#ff0000'],
      ]}
    />
    <Gizmo
      x={2735}
      y={993}
      labels={[
        ['z', -23, -70, '#0000f5'],
        ['y', 100, 5, '#009600'],
        ['x', -30, 80, '#ff0000'],
      ]}
    />
  </SceneSvg>
);

const docs = [
  { name: 'microstrip antenna' },
  { name: 'C_matesurface_7*' },
  { name: 'Untitled_0*', active: true },
];

const Documents = () => (
  <DocArea>
    <DocTabs>
      {docs.map(({ name, active }) => (
        <DocTab key={name} $active={active}>
          <Icon name="project" />
          <span>{name}</span>
          <DocClose $active={active} aria-label={`Close ${name}`}>
            <CloseMark size={12} color={active ? '#fff' : '#f6f6f6'} />
          </DocClose>
        </DocTab>
      ))}
    </DocTabs>
    <ViewFrame>
      <Scene />
      <InfoBox>
        <InfoTitle>component1:feed</InfoTitle>
        <dl>
          <dt>Material</dt>
          <dd>PEC</dd>
          <dt>Type</dt>
          <dd>PEC</dd>
          <dt>Thermal cond.</dt>
          <dd>PTC</dd>
        </dl>
      </InfoBox>
    </ViewFrame>
    <BottomTabs $short>
      <BottomTab $active $wide>
        3D
      </BottomTab>
      <BottomTab $wide>Schematic</BottomTab>
      <TabLine />
    </BottomTabs>
  </DocArea>
);

const Results = () => (
  <Dock>
    <PanelTitle title="Result Navigator" />
    <ResultBox>
      <Chevron>
        <svg width="14" height="8" viewBox="0 0 14 8">
          <path d="M1 1l6 6 6-6" fill="none" stroke="#777" strokeWidth="2" />
        </svg>
      </Chevron>
      <ResultTable>
        <thead>
          <tr>
            <th aria-label="Filter">
              <Icon name="funnel" />
            </th>
            <th>3D Run ID</th>
          </tr>
        </thead>
        <tbody>
          <tr>
            <td>
              <Icon name="pin" />
            </td>
            <td>0: Current Run</td>
          </tr>
        </tbody>
      </ResultTable>
    </ResultBox>
    <BottomTabs>
      <BottomTab $active>Result Navigator</BottomTab>
      <BottomTab>Parameter List</BottomTab>
      <TabLine />
    </BottomTabs>
  </Dock>
);

const Messages = () => (
  <Dock>
    <PanelTitle title="Messages" />
    <MessageTools>
      <IconButton aria-label="Errors">
        <Icon name="errorBall" size={30} />
      </IconButton>
      <IconButton aria-label="Warnings">
        <Icon name="warning" size={30} />
      </IconButton>
      <IconButton aria-label="Information">
        <Icon name="infoBubble" size={30} />
      </IconButton>
      <IconButton aria-label="Clear messages">
        <Icon name="clearList" size={30} />
      </IconButton>
    </MessageTools>
    <MessageBox />
    <BottomTabs>
      <TabLine />
      <BottomTab>Progress</BottomTab>
      <BottomTab $active>Messages</BottomTab>
    </BottomTabs>
  </Dock>
);

/* ---------- dialog ---------- */

const Field = ({ id, label, value, wide, disabled }) => (
  <FieldBox $wide={wide}>
    <label htmlFor={id}>{label}</label>
    <TextInput id={id} type="text" defaultValue={value} disabled={disabled} />
  </FieldBox>
);

const Pick = ({ id, label, value, framed }) => (
  <FieldBox $wide>
    <label htmlFor={id}>{label}</label>
    <SelectWrap>
      <DialogSelect id={id} disabled $framed={framed}>
        <option>{value}</option>
      </DialogSelect>
      <CaretSlot>
        <svg width="18" height="10" viewBox="0 0 18 10">
          <path d="M1 1l8 7 8-7" fill="none" stroke="#b0b0b0" strokeWidth="2" />
        </svg>
      </CaretSlot>
    </SelectWrap>
  </FieldBox>
);

const CylinderDialog = () => {
  const [axis, setAxis] = useState('W');
  return (
    <Dialog role="dialog" aria-label="Cylinder">
      <DialogTitle>
        <span>Cylinder</span>
        <IconButton aria-label="Close dialog">
          <CloseMark size={22} color="#8a8a8a" width={1} />
        </IconButton>
      </DialogTitle>
      <DialogBody>
        <Form>
          <Field id="name" label="Name:" value="feed" wide disabled />
          <Orientation role="radiogroup" aria-label="Orientation:">
            <span>Orientation:</span>
            {['U', 'V', 'W'].map((o) => (
              <label key={o}>
                <Radio type="radio" name="axis" checked={axis === o} onChange={() => setAxis(o)} />
                {o}
              </label>
            ))}
          </Orientation>
          <Field id="outer" label="Outer radius:" value="1.12" />
          <Field id="inner" label="Inner radius:" value="0.0" />
          <Field id="ucenter" label="Ucenter:" value="0" />
          <Field id="vcenter" label="Vcenter:" value="0" />
          <Field id="wmin" label="Wmin:" value="-2.8" />
          <Field id="wmax" label="Wmax:" value="0" />
          <Field id="segments" label="Segments:" value="0" />
          <Pick id="component" label="Component:" value="component1" framed />
          <Pick id="material" label="Material:" value="PEC" />
        </Form>
        <DialogButtons>
          <DialogButton>OK</DialogButton>
          <DialogButton $hot>Cancel</DialogButton>
          <DialogButton>Preview</DialogButton>
          <DialogButton>Help</DialogButton>
        </DialogButtons>
      </DialogBody>
      <Grip>
        <svg width="24" height="24" viewBox="0 0 24 24">
          <path d="M1 24L24 1M9 24L24 9M17 24l7-7" stroke="#8f8f8f" strokeWidth="2" />
        </svg>
      </Grip>
    </Dialog>
  );
};

const StatusBar = () => (
  <Status>
    <Ready>Ready</Ready>
    <Tool aria-label="Zoom window">
      <Icon name="zoomFrame" />
    </Tool>
    <Tool $active aria-label="Pan">
      <Icon name="pan" />
    </Tool>
    <Tool aria-label="Rotate">
      <Icon name="orbit" />
    </Tool>
    <Tool aria-label="Zoom">
      <Icon name="zoom" />
    </Tool>
    <Tool aria-label="Rotate in plane">
      <Icon name="spin" />
    </Tool>
    <StatusLine />
    <Tool aria-label="Fit view">
      <Icon name="fit" />
    </Tool>
    <Tool aria-label="Cutting plane">
      <Icon name="cutSmall" />
    </Tool>
    <Tool $wide aria-label="View">
      <Icon name="cube" />
      <Caret $color="#777" />
    </Tool>
    <StatusLine />
    <Tool aria-label="Report">
      <Icon name="report" />
    </Tool>
    <StatusText>Raster=10.000</StatusText>
    <StatusText>Tetrahedrons</StatusText>
    <StatusText $blue>Normal</StatusText>
    <StatusText>
      <span>mm</span>
      <span>GHz</span>
      <span>ns</span>
      <span>K</span>
    </StatusText>
  </Status>
);

const App = () => {
  return (
    <Page>
      <GlobalStyle />
      <Defs />
      <TitleBar />
      <MenuBar />
      <Ribbon />
      <Main>
        <Sidebar />
        <Center>
          <Documents />
          <Splitter />
          <Docks>
            <Results />
            <Messages />
          </Docks>
        </Center>
      </Main>
      <StatusBar />
      <Desktop>
        <Watermark>CSDN @木棉.</Watermark>
      </Desktop>
      <CylinderDialog />
    </Page>
  );
};

const Page = styled.div`
  min-height: 100vh;
  display: flex;
  flex-direction: column;
  position: relative;
  background-color: #e6e6e6;
`;

const HiddenSvg = styled.svg`
  position: absolute;
`;

const IconButton = styled.button`
  display: flex;
  align-items: center;
  justify-content: center;
`;

const Caret = styled.span`
  flex: none;
  border-left: 5px solid transparent;
  border-right: 5px solid transparent;
  border-top: 6px solid ${(props) => props.$color};
  margin-top: ${(props) => (props.$low ? '16px' : '4px')};
`;

const Title = styled.header`
  height: 64px;
  padding: 0 26px 10px 25px;
  display: grid;
  grid-template-columns: 1fr auto 1fr;
  align-items: center;
  background-color: #005686;
  color: #fff;
`;

const QuickBar = styled.div`
  display: flex;
  gap: 14px;
`;

const WindowTitle = styled.h1`
  margin: 6px 0 0;
  padding-left: 158px;
  font-size: 25px;
  font-weight: 400;
`;

const WindowButtons = styled.div`
  display: flex;
  justify-content: flex-end;
  gap: 52px;
`;

const Menu = styled.nav`
  height: 46px;
  padding-right: 12px;
  display: flex;
  align-items: center;
  gap: 14px;
  background-color: #005686;
  color: #fff;
`;

const MenuTab = styled.button`
  align-self: stretch;
  margin-right: -14px;
  padding: ${(props) => (props.$wide ? '0 45px 0 41px' : '0 22px')};
  background-color: ${(props) => (props.$active ? '#f0f0f0' : 'transparent')};
  color: ${(props) => (props.$active ? '#0b4870' : '#fff')};
`;

const MenuSearch = styled.div`
  width: 318px;
  height: 42px;
  margin-left: auto;
  padding: 0 14px 0 4px;
  display: flex;
  align-items: center;
  background-color: #00436a;

  input {
    width: 100%;
    min-width: 0;
    padding: 0;
    border: none;
    background: none;
  }
  input::placeholder {
    color: #b9cbd7;
    opacity: 1;
  }
`;

const RibbonBar = styled.section`
  height: 196px;
  padding-top: 4px;
  display: flex;
  background-color: #f0f0f0;
  border-top: 2px solid #dcdcdc;
  box-shadow: inset 0 -2px #f0f0f0, inset 0 -4px #d0d0d0;
`;

const RibbonGroup = styled.div`
  flex: ${(props) => props.$grow} 1 0;
  min-width: 0;
  height: 182px;
  display: flex;
  flex-direction: column;
  border-right: 2px solid #d4d4d4;
`;

const GroupBody = styled.div`
  height: 142px;
  padding-left: ${(props) => props.$pad || 0}px;
  display: grid;
  grid-template-columns: ${(props) => props.$cols || '1fr'};
  justify-items: ${(props) => (props.$center ? 'center' : 'stretch')};
  align-items: start;
`;

const GroupTitle = styled.div`
  padding-left: 6px;
  line-height: 36px;
  text-align: center;
  color: #444;
`;

const Rows = styled.div`
  padding-top: 2px;
  padding-left: ${(props) => (props.$inset ? '6px' : '0')};
  display: grid;
  grid-auto-rows: 46px;
`;

const SmallButton = styled.button`
  display: flex;
  align-items: center;
  gap: 8px;
  white-space: nowrap;
  color: #333;

  &:disabled {
    color: #999;
  }
  ${Caret} {
    margin-left: 6px;
  }
`;

const BigButton = styled.button`
  padding-top: 6px;
  display: flex;
  flex-direction: column;
  align-items: center;
  line-height: 32px;
  white-space: nowrap;

  &:disabled {
    color: #999;
  }
  svg {
    margin-bottom: 4px;
  }
`;

const BigSecond = styled.span`
  height: 32px;
  display: flex;
  align-items: center;
  gap: 8px;
`;

const ShapeRows = styled.div`
  padding-top: 12px;
  display: grid;
  grid-auto-rows: 60px;
`;

const ShapeRow = styled.div`
  display: flex;
  align-items: center;
  gap: ${(props) => props.$gap}px;
`;

const Divider = styled.span`
  width: 2px;
  height: 34px;
  background-color: #c8c8c8;
`;

const RibbonField = styled.div`
  display: grid;
  grid-template-columns: 104px 1fr;
  align-items: center;
  padding-right: 6px;
`;

const SelectWrap = styled.div`
  display: grid;
  align-items: center;

  > * {
    grid-area: 1 / 1;
  }
`;

const CaretSlot = styled.span`
  display: flex;
  justify-self: end;
  padding-right: 10px;
  pointer-events: none;
`;

const RibbonSelect = styled.select`
  appearance: none;
  width: 100%;
  height: 46px;
  padding: 0 5px;
  border: 2px solid #a8a8a8;
  border-radius: 0;
  background-color: #fff;
  color: #000;
`;

const RibbonInput = styled.input`
  width: 100%;
  min-width: 0;
  height: 46px;
  padding: 0 5px;
  border: 2px solid #a8a8a8;
  background-color: #fff;
  color: #000;
`;

const SliderRow = styled.div`
  display: flex;
  align-items: center;
  gap: 10px;
  padding-right: 6px;
`;

const Slider = styled.input`
  appearance: none;
  flex: 1;
  min-width: 0;
  height: 42px;
  background: linear-gradient(#a8a8a8, #a8a8a8) center / 100% 4px no-repeat;

  &::-webkit-slider-thumb {
    appearance: none;
    width: 12px;
    height: 42px;
    border: 2px solid #a8a8a8;
    background-color: #ececec;
  }
`;

const Main = styled.main`
  flex: 1;
  display: grid;
  grid-template-columns: 512fr 2360fr;
  gap: 8px;
`;

const Side = styled.aside`
  min-width: 0;
  display: flex;
  flex-direction: column;
`;

const PanelHead = styled.div`
  height: 32px;
  padding: 0 8px 0 11px;
  display: flex;
  align-items: center;
  justify-content: space-between;
  background-color: #fff;
  font-family: ${MONO};
  font-size: 20px;
  color: #000;
`;

const WorkspaceBox = styled.div`
  height: 142px;
  display: flex;
  border: 2px solid #a8a8a8;
  background-color: #fff;
  overflow: hidden;
`;

const FileList = styled.div`
  flex: 1;
  overflow: hidden;
  font-size: 24px;
`;

const FileRow = styled.div`
  height: ${(props) => (props.$root ? '35px' : '38px')};
  padding-left: ${(props) => (props.$root ? '10px' : '86px')};
  display: flex;
  align-items: center;
  gap: 12px;
  font-weight: ${(props) => (props.$bold ? 700 : 400)};
  color: #000;

  svg + svg {
    margin-left: 6px;
  }
`;

const ScrollTrack = styled.div`
  width: 34px;
  display: flex;
  flex-direction: column;
  gap: 2px;
  border-left: 2px solid #a8a8a8;
  background-color: #c8c8c8;
`;

const ScrollArrow = styled.button`
  height: 32px;
  display: grid;
  place-items: center;
  background-color: #fdfdfd;
  border-bottom: 2px solid #a8a8a8;

  &::after {
    content: '';
    border-left: 9px solid transparent;
    border-right: 9px solid transparent;
    border-${(props) => (props.$up ? 'bottom' : 'top')}: 9px solid #777;
  }
`;

const ScrollThumb = styled.div`
  height: 50px;
  margin-bottom: auto;
  background-color: #f0f0f0;
  border-bottom: 2px solid #a8a8a8;
`;

const Splitter = styled.div`
  height: 8px;
  background-color: #ccc;
`;

const TreeSearch = styled.input`
  height: 40px;
  margin: 6px 0;
  padding: 0 4px;
  border: 2px solid #a8a8a8;
  background-color: #fdfdfd;
  font-family: ${MONO};
  font-size: 20px;

  &::placeholder {
    color: #888;
    opacity: 1;
  }
`;

const TreeBox = styled.div`
  flex: 1;
  padding: 0 4px;
  border: 2px solid #a8a8a8;
  background-color: #fff;
  font-family: ${TAHOMA};
  font-size: 24px;
  color: #000;
`;

const TreeRow = styled.div`
  height: 32px;
  display: flex;
  align-items: center;
`;

const vertical = { full: '100%', top: '50%', bottom: '50%' };

const Guide = styled.span`
  width: 38px;
  height: 32px;
  display: grid;
  place-items: center;
  background-repeat: no-repeat;
  background-image: repeating-linear-gradient(to bottom, #777 0 1px, transparent 1px 3px),
    repeating-linear-gradient(to right, #777 0 1px, transparent 1px 3px);
  background-position: 18px ${(props) => (props.$v === 'bottom' ? 'bottom' : 'top')}, right center;
  background-size: 2px ${(props) => vertical[props.$v] || '0'}, ${(props) => (props.$h ? '20px' : '0')} 2px;
`;

const Expander = styled.button`
  width: 18px;
  height: 18px;
  display: grid;
  place-items: center;
  border: 2px solid #999;
  background: linear-gradient(#fff, #dcdcdc);
`;

const TreeIcon = styled.span`
  padding-left: ${(props) => (props.$deep ? '23px' : '4px')};
  padding-top: 4px;
`;

const TreeLabel = styled.span`
  margin-left: 4px;
  padding: 0 4px;
  line-height: 32px;
  white-space: nowrap;
  background-color: ${(props) => (props.$selected ? '#c8c8c8' : 'transparent')};
`;

const Center = styled.div`
  min-width: 0;
  display: flex;
  flex-direction: column;
`;

const DocArea = styled.section`
  flex: 1;
  display: flex;
  flex-direction: column;
`;

const DocTabs = styled.div`
  height: 54px;
  display: flex;
`;

const DocTab = styled.div`
  padding: 0 ${(props) => (props.$active ? '26px' : '26px')} 0 ${(props) => (props.$active ? '22px' : '24px')};
  display: flex;
  align-items: center;
  gap: 8px;
  border: 2px solid ${(props) => (props.$active ? '#a8a8a8' : 'transparent')};
  border-bottom: none;
  border-left-width: ${(props) => (props.$active ? '2px' : '0')};
  background-color: ${(props) => (props.$active ? '#fff' : 'transparent')};
  font-family: ${MONO};
  font-size: 20px;
  white-space: nowrap;
  color: #000;
`;

const DocClose = styled.button`
  width: 28px;
  height: 28px;
  display: grid;
  place-items: center;
  border: 2px solid ${(props) => (props.$active ? '#c8381c' : '#a8a8a8')};
  border-radius: 3px;
  background-color: ${(props) => (props.$active ? '#e2754e' : '#c4c4c4')};
`;

const ViewFrame = styled.div`
  flex: 1;
  position: relative;
  display: flex;
  margin-right: 2px;
  padding: 2px 2px 0 5px;
  border-top: 3px solid #a8a8a8;
  background-color: #e6e6e6;
  box-shadow: 0 3px #a8a8a8;
`;

const SceneSvg = styled.svg`
  flex: 1;
  width: 100%;
  min-width: 0;
  height: auto;
`;

const InfoBox = styled.div`
  position: absolute;
  left: 14px;
  bottom: 10px;
  width: 282px;
  padding: 7px 9px 9px;
  background-color: rgba(255, 255, 255, 0.7);
  font-size: 26px;
  line-height: 32px;
  color: #333;

  dl {
    margin: 0;
    padding-left: 5px;
    display: grid;
    grid-template-columns: 198px 1fr;
  }
  dd {
    margin: 0;
  }
`;

const InfoTitle = styled.div`
  font-family: ${MONO};
  font-size: 22px;
  font-weight: 700;
`;

const BottomTabs = styled.div`
  height: ${(props) => (props.$short ? '39px' : '40px')};
  padding-top: ${(props) => (props.$short ? '3px' : '0')};
  display: flex;
  align-items: center;
  font-family: ${MONO};
  font-size: 20px;
  color: #000;
`;

const BottomTab = styled.button`
  align-self: stretch;
  min-width: ${(props) => (props.$wide ? '200px' : '0')};
  padding: 0 ${(props) => (props.$wide ? '0' : '24px')};
  background-color: ${(props) => (props.$active ? '#fff' : 'transparent')};
  border-bottom: 4px solid ${(props) => (props.$active ? '#005686' : 'transparent')};
  box-shadow: ${(props) => (props.$active ? 'inset 1px 0 #a8a8a8, inset -1px 0 #a8a8a8' : 'none')};
`;

const TabLine = styled.span`
  width: 2px;
  height: 24px;
  background-color: #a8a8a8;
`;

const Docks = styled.div`
  height: 472px;
  display: grid;
  grid-template-columns: 1494fr 858fr;
  gap: 8px;
`;

const Dock = styled.section`
  min-width: 0;
  display: flex;
  flex-direction: column;
`;

const ResultBox = styled.div`
  flex: 1;
  position: relative;
  border: 2px solid #83858f;
  background-color: #fff;
`;

const Chevron = styled.div`
  position: absolute;
  left: 51%;
  top: 1px;
`;

const ResultTable = styled.table`
  width: 100%;
  border-collapse: collapse;
  text-align: left;
  color: #000;

  th,
  td {
    padding: 0 8px;
    font-weight: 400;
    line-height: 30px;
  }
  th {
    height: 46px;
    padding-left: 16px;
  }
  td {
    height: 40px;
    padding-bottom: 8px;
    color: #a0a0a0;
  }
  th:first-child,
  td:first-child {
    width: 46px;
    padding: 0 7px;
    border-right: 1px solid #dcdcdc;
  }
  td:first-child {
    background-color: #e4e4e4;
  }
  tbody tr {
    border-bottom: 2px solid #e2e2e2;
  }
`;

const MessageTools = styled.div`
  height: 40px;
  padding: 0 0 2px 9px;
  display: flex;
  align-items: center;
  gap: 28px;

  button:last-child {
    margin-left: 10px;
  }
`;

const MessageBox = styled.div`
  flex: 1;
  margin: 0 3px 2px 2px;
  border: 3px solid #777;
  border-right: 1px solid #ddd;
  border-bottom: 1px solid #ddd;
  background-color: #fff;
`;

const Status = styled.footer`
  height: 58px;
  padding: 0 5px 6px 0;
  display: flex;
  align-items: center;
  background-color: #f0f0f0;
  border-bottom: 2px solid #b0b3b8;
  color: #444;
`;

const Ready = styled.span`
  margin-right: auto;
  padding-left: 12px;
`;

const Tool = styled.button`
  width: ${(props) => (props.$wide ? '66px' : '46px')};
  height: 44px;
  display: flex;
  align-items: center;
  justify-content: center;
  gap: 6px;
  background-color: ${(props) => (props.$active ? '#c4c4c4' : 'transparent')};
`;

const StatusLine = styled.span`
  width: 2px;
  height: 32px;
  margin: 0 6px;
  background-color: #ccc;
`;

const StatusText = styled.span`
  height: 34px;
  padding: 0 12px;
  display: flex;
  align-items: center;
  gap: 16px;
  border-right: 2px solid #000;
  color: ${(props) => (props.$blue ? '#00105e' : '#444')};
`;

const Desktop = styled.div`
  height: 14px;
  position: relative;
  background-color: #dadde9;
`;

const Watermark = styled.span`
  position: absolute;
  right: 14px;
  bottom: 6px;
  font-size: 13px;
  line-height: 20px;
  color: #888;
`;

const Dialog = styled.section`
  position: absolute;
  left: 62.5%;
  top: 325px;
  width: 753px;
  border: 2px solid #999;
  border-radius: 16px;
  background-color: #f0f0f0;
  box-shadow: 0 20px 60px 10px rgba(0, 0, 0, 0.35);
  font-family: ${TAHOMA};
  font-size: 24px;
  color: #000;
  overflow: hidden;
`;

const DialogTitle = styled.div`
  height: 59px;
  padding: 0 22px 4px 17px;
  display: flex;
  align-items: center;
  justify-content: space-between;
  background-color: #f4f4f4;
  font-family: ${UI};
  font-size: 23px;
  color: #8a8a8a;
`;

const DialogBody = styled.div`
  padding: 25px 26px 26px 25px;
  display: flex;
  justify-content: space-between;
`;

const Form = styled.div`
  width: 493px;
  display: grid;
  grid-template-columns: 216px 216px;
  column-gap: 61px;
  row-gap: 21px;
`;

const FieldBox = styled.div`
  grid-column: ${(props) => (props.$wide ? '1 / -1' : 'auto')};
  display: grid;
  gap: 6px;
  line-height: 28px;
`;

const TextInput = styled.input`
  width: 100%;
  height: 40px;
  padding: 0 7px;
  border: 1px solid #e4e4e4;
  border-bottom: 2px solid #868686;
  border-radius: 3px;
  background-color: #fff;

  &:disabled {
    border: 2px solid #fafafa;
    background-color: #f0f0f0;
    color: #7d7d7d;
  }
`;

const DialogSelect = styled.select`
  appearance: none;
  width: 100%;
  height: 42px;
  padding: 0 7px;
  border: 2px solid ${(props) => (props.$framed ? '#c2c2c2' : '#ebebeb')};
  border-radius: 2px;
  background: ${(props) =>
    props.$framed ? 'linear-gradient(#f0f0f0, #f0f0f0) 4px 50% / 448px 32px no-repeat #fff' : '#fafafa'};
  opacity: 1;

  &:disabled {
    color: #7d7d7d;
  }
`;

const Orientation = styled.div`
  grid-column: 1 / -1;
  height: 50px;
  display: flex;
  align-items: center;

  span {
    width: 165px;
  }
  label {
    width: 98px;
    display: flex;
    align-items: center;
    gap: 6px;
  }
`;

const Radio = styled.input`
  appearance: none;
  width: 26px;
  height: 26px;
  border: 2px solid #777;
  border-radius: 50%;
  background-color: #f6f6f6;

  &:checked {
    border: 8px solid #005fb8;
    background-color: #fff;
  }
`;

const DialogButtons = styled.div`
  width: 172px;
  display: flex;
  flex-direction: column;
  gap: 17px;
`;

const DialogButton = styled.button`
  height: 46px;
  border: 2px solid ${(props) => (props.$hot ? '#a9c3d6' : '#cfcfd2')};
  border-radius: 6px;
  background-color: ${(props) => (props.$hot ? '#f6fbfd' : '#fdfdfd')};
`;

const Grip = styled.div`
  position: absolute;
  right: 0;
  bottom: 0;
`;

export default App;
